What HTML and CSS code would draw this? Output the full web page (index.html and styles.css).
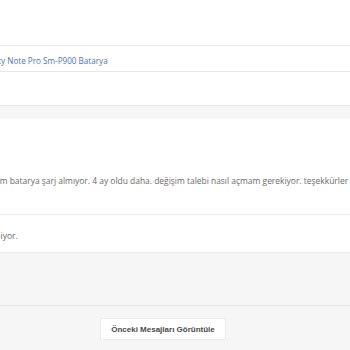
FILE: index.html
```html
<!DOCTYPE html>
<html lang="tr">
<head>
    <meta charset="UTF-8">
    <title>Destek Talebi</title>
    <meta name="viewport" content="width=device-width, initial-scale=1.0">
    <link rel="stylesheet" href="styles.css">
</head>
<body>
    <div class="ticket">
        <div class="top-space"></div>
        <div class="subject-row">
            <a href="#" class="subject-link">Samsung Galaxy Note Pro Sm-P900 Batarya</a>
        </div>
        <div class="gap"></div>
        <div class="panel-head"></div>
        <div class="message">
            <p class="message-text">Merhaba, aldığım batarya şarj almıyor. 4 ay oldu daha. değişim talebi nasıl açmam gerekiyor. teşekkürler</p>
        </div>
        <div class="reply-row">
            <p class="reply-text">İnceleniyor.</p>
        </div>
        <div class="panel-foot"></div>
        <div class="actions">
            <button class="btn-prev">Önceki Mesajları Görüntüle</button>
        </div>
    </div>
</body>
</html>
```

FILE: styles.css
```css
body {
    margin: 0;
    background: #fff;
    font-family: 'Open Sans', 'Noto Sans', sans-serif;
    overflow: hidden;
}

.ticket {
    width: 350px;
}
.top-space {
    height: 45px;
}
.subject-row {
    border-top: 1px solid #e8e8e8;
    border-bottom: 1px solid #e8e8e8;
    height: 27px;
    padding-top: 4px;
    box-sizing: border-box;
    display: flex;
    align-items: center;
    white-space: nowrap;
}
.subject-link {
    margin-left: -57px;
    color: #4f74b3;
    font-size: 8.15px;
    text-decoration: none;
}
.gap {
    height: 33px;
}
.panel-head {
    border-top: 1px solid #e6e6e6;
    background: #f6f6f6;
    height: 13px;
}
.message {
    height: 95px;
    display: flex;
    align-items: center;
    padding-top: 28px;
    box-sizing: border-box;
    white-space: nowrap;
}
.message-text {
    margin: 0 0 0 -61px;
    color: #6a6a6a;
    font-size: 8.45px;
}
.reply-row {
    border-top: 1px solid #ebebeb;
    border-bottom: 1px solid #ebebeb;
    height: 39px;
    padding-top: 3px;
    box-sizing: border-box;
    display: flex;
    align-items: center;
    white-space: nowrap;
}
.reply-text {
    margin: 0 0 0 -28px;
    color: #6a6a6a;
    font-size: 8.5px;
}
.panel-foot {
    background: #f6f6f6;
    height: 52px;
    border-bottom: 1px solid #e6e6e6;
}
.actions {
    background: #f6f6f6;
    height: 50px;
    display: flex;
    justify-content: center;
    align-items: flex-start;
    padding-top: 12px;
    box-sizing: border-box;
}
.btn-prev {
    margin-right: 24px;
    background: #fff;
    border: 1px solid #ececec;
    border-radius: 2px;
    padding: 0 6px;
    height: 22px;
    width: 126px;
    font-family: 'Liberation Sans', Arial, sans-serif;
    font-weight: bold;
    font-size: 8px;
    color: #4a4a4a;
}
```
